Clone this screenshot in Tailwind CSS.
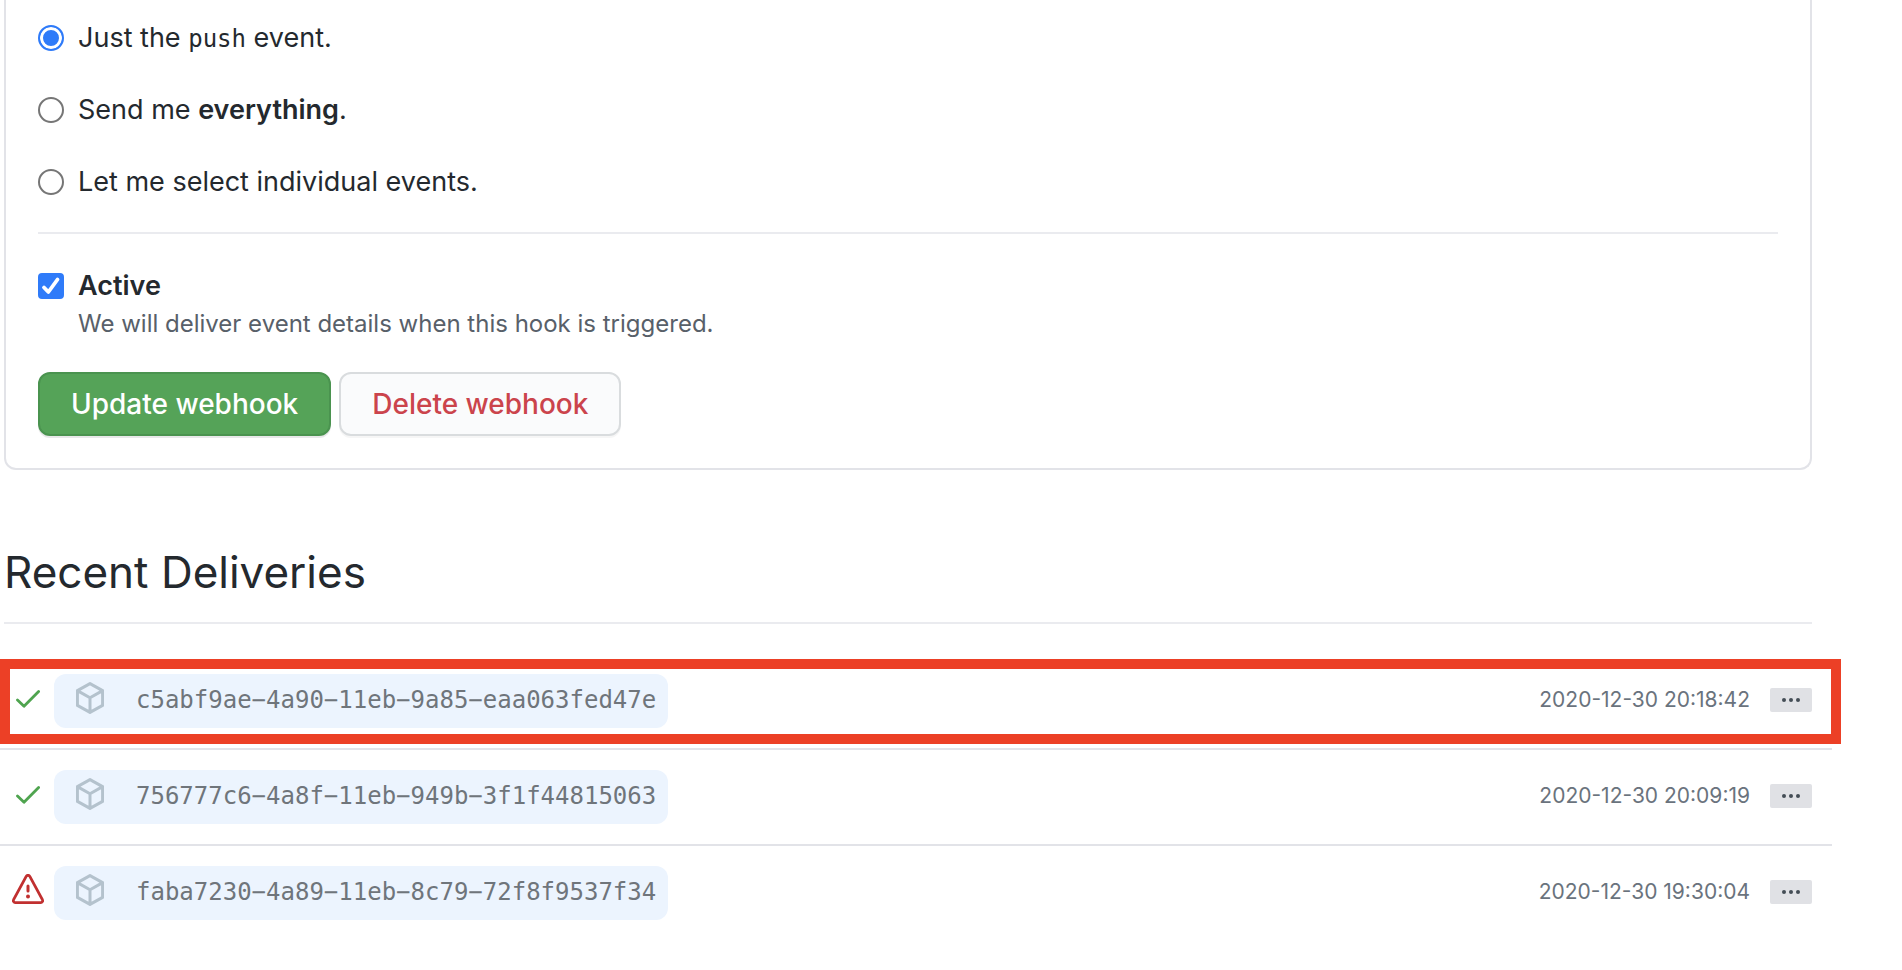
<!DOCTYPE html>
<html lang="en">
<head>
  <meta charset="UTF-8">
  <title>Manage webhook</title>
  <script src="https://cdn.jsdelivr.net/npm/@tailwindcss/browser@4"></script>
</head>
<body class="bg-white font-['Inter',sans-serif] text-[#24292e]">

<!-- Icons -->
<svg class="hidden">
  <symbol id="check" viewBox="0 0 24 18">
    <path d="M1.5 10 L8 16.3 L22.6 1.5" fill="none" stroke="currentColor" stroke-width="2.8" stroke-linecap="round" stroke-linejoin="round"/>
  </symbol>
  <symbol id="package" viewBox="0 0 28 32">
    <path d="M14 1.6 L26.6 8.6 V23.4 L14 30.4 L1.4 23.4 V8.6 Z M1.8 8.9 L14 15.8 L26.2 8.9 M14 15.8 V30" fill="none" stroke="currentColor" stroke-width="3" stroke-linejoin="round"/>
  </symbol>
  <symbol id="alert" viewBox="0 0 32 30">
    <path d="M14.2 2.4 a2 2 0 0 1 3.6 0 L30.4 25.6 a2 2 0 0 1 -1.8 3 H3.4 a2 2 0 0 1 -1.8 -3 Z" fill="none" stroke="currentColor" stroke-width="2.8" stroke-linejoin="round"/>
    <path d="M16 12 V17" stroke="currentColor" stroke-width="3" stroke-linecap="round"/>
    <circle cx="16" cy="22.5" r="2" fill="currentColor"/>
  </symbol>
  <symbol id="dots" viewBox="0 0 18 4">
    <circle cx="2" cy="2" r="2" fill="currentColor"/>
    <circle cx="9" cy="2" r="2" fill="currentColor"/>
    <circle cx="16" cy="2" r="2" fill="currentColor"/>
  </symbol>
</svg>

<main class="overflow-hidden pb-10">
  <!-- Webhook settings -->
  <form class="ml-1 mr-[90px] rounded-b-xl border-2 border-t-0 border-[#e2e3e8] px-8 pt-[18px] pb-8" onsubmit="return false">
    <div class="space-y-8">
      <label class="flex items-center gap-3.5 text-[27px] leading-10">
        <input type="radio" name="events" checked class="size-[26px] appearance-none rounded-full border-2 border-[#767676] checked:border-[#2f7bf9] checked:bg-[#2f7bf9] checked:shadow-[inset_0_0_0_3px_white]">
        <span>Just the <code class="font-['DejaVu_Sans_Mono',monospace] text-2xl">push</code> event.</span>
      </label>
      <label class="flex items-center gap-3.5 text-[27px] leading-10">
        <input type="radio" name="events" class="size-[26px] appearance-none rounded-full border-2 border-[#767676] checked:border-[#2f7bf9] checked:bg-[#2f7bf9] checked:shadow-[inset_0_0_0_3px_white]">
        <span>Send me <strong class="font-semibold">everything</strong>.</span>
      </label>
      <label class="flex items-center gap-3.5 text-[27px] leading-10">
        <input type="radio" name="events" class="size-[26px] appearance-none rounded-full border-2 border-[#767676] checked:border-[#2f7bf9] checked:bg-[#2f7bf9] checked:shadow-[inset_0_0_0_3px_white]">
        <span>Let me select individual events.</span>
      </label>
    </div>

    <hr class="mt-[30px] mb-8 border-t-2 border-[#eaebef]">

    <label for="active" class="flex items-center gap-3.5 text-[27px] leading-10 font-semibold">
      <span class="relative size-[26px]">
        <input id="active" type="checkbox" checked class="peer block size-[26px] appearance-none rounded border-2 border-[#767676] checked:border-[#2f7bf9] checked:bg-[#2f7bf9]">
        <svg class="pointer-events-none absolute inset-0 hidden size-[26px] text-white peer-checked:block" viewBox="0 0 26 26">
          <path d="M6 14.5 L10.4 19 L19.5 6.5" fill="none" stroke="currentColor" stroke-width="3.8" stroke-linecap="round" stroke-linejoin="round"/>
        </svg>
      </span>
      Active
    </label>
    <p class="pl-10 text-2xl leading-9 text-[#586069]">We will deliver event details when this hook is triggered.</p>

    <div class="mt-[30px] flex gap-2">
      <button type="submit" class="h-16 rounded-xl border-2 border-[#4a934f] bg-[#55a358] px-[31px] text-[28px] font-medium text-white shadow-[0_2px_0_rgba(27,31,35,0.1)]">Update webhook</button>
      <button type="button" class="h-16 rounded-xl border-2 border-[#d9dcde] bg-[#fafbfc] px-[31px] text-[28px] font-medium text-[#cb444c] shadow-[0_2px_0_rgba(27,31,35,0.04)]">Delete webhook</button>
    </div>
  </form>

  <!-- Deliveries -->
  <h2 class="mt-[70px] mr-[90px] ml-1 border-b-2 border-[#eaebef] pb-[18px] text-[44px] leading-16">Recent Deliveries</h2>

  <ul class="mt-[30px] mr-[70px]">
    <li class="relative flex h-24 items-center border-b-2 border-[#e2e3e8] pr-5 pl-3">
      <svg class="mx-1 mb-1 h-[18px] w-6 text-[#4fa44f]"><use href="#check"/></svg>
      <a href="#" class="ml-2.5 flex h-[54px] items-center gap-8 rounded-xl bg-[#ecf4fe] pr-3 pb-0.5 pl-[22px] font-['DejaVu_Sans_Mono',monospace] text-2xl text-[#6f757b]">
        <svg class="mb-1 h-8 w-7 text-[#b4c2cd]"><use href="#package"/></svg>
        c5abf9ae−4a90−11eb−9a85−eaa063fed47e
      </a>
      <time class="mb-0.5 ml-auto text-[21px] text-[#6a737d]">2020-12-30 20:18:42</time>
      <button type="button" aria-label="Details" class="mb-0.5 ml-5 flex h-6 w-[42px] items-center justify-center rounded-xs bg-[#e0e1e5] text-[#444d56]"><svg class="h-1 w-[18px]"><use href="#dots"/></svg></button>
      <div class="pointer-events-none absolute top-[5px] -right-[9px] left-0 h-[85px] border-10 border-[#ec4026]"></div>
    </li>
    <li class="flex h-24 items-center border-b-2 border-[#e2e3e8] pr-5 pl-3">
      <svg class="mx-1 mb-1 h-[18px] w-6 text-[#4fa44f]"><use href="#check"/></svg>
      <a href="#" class="ml-2.5 flex h-[54px] items-center gap-8 rounded-xl bg-[#ecf4fe] pr-3 pb-0.5 pl-[22px] font-['DejaVu_Sans_Mono',monospace] text-2xl text-[#6f757b]">
        <svg class="mb-1 h-8 w-7 text-[#b4c2cd]"><use href="#package"/></svg>
        756777c6−4a8f−11eb−949b−3f1f44815063
      </a>
      <time class="mb-0.5 ml-auto text-[21px] text-[#6a737d]">2020-12-30 20:09:19</time>
      <button type="button" aria-label="Details" class="mb-0.5 ml-5 flex h-6 w-[42px] items-center justify-center rounded-xs bg-[#e0e1e5] text-[#444d56]"><svg class="h-1 w-[18px]"><use href="#dots"/></svg></button>
    </li>
    <li class="flex h-24 items-center border-b-2 border-transparent pr-5 pl-3">
      <svg class="mb-2 h-[30px] w-8 text-[#c13030]"><use href="#alert"/></svg>
      <a href="#" class="ml-2.5 flex h-[54px] items-center gap-8 rounded-xl bg-[#ecf4fe] pr-3 pb-0.5 pl-[22px] font-['DejaVu_Sans_Mono',monospace] text-2xl text-[#6f757b]">
        <svg class="mb-1 h-8 w-7 text-[#b4c2cd]"><use href="#package"/></svg>
        faba7230−4a89−11eb−8c79−72f8f9537f34
      </a>
      <time class="mb-0.5 ml-auto text-[21px] text-[#6a737d]">2020-12-30 19:30:04</time>
      <button type="button" aria-label="Details" class="mb-0.5 ml-5 flex h-6 w-[42px] items-center justify-center rounded-xs bg-[#e0e1e5] text-[#444d56]"><svg class="h-1 w-[18px]"><use href="#dots"/></svg></button>
    </li>
  </ul>
</main>

</body>
</html>
